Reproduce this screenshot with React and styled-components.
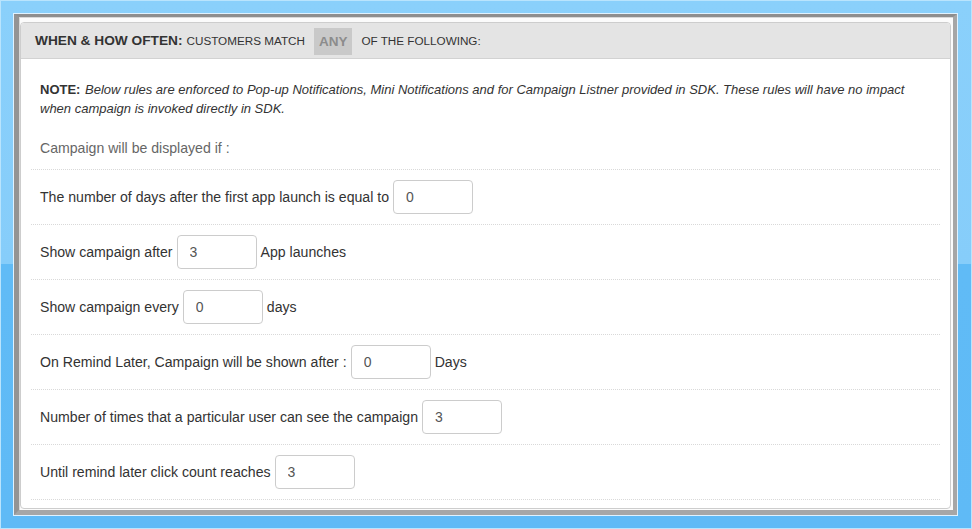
import React from "react";
import styled, { createGlobalStyle } from "styled-components";

const Global = createGlobalStyle`
  html, body { margin: 0; padding: 0; }
  body { font-family: "Liberation Sans", Arial, sans-serif; }
  * { box-sizing: border-box; }
`;

const Page = styled.div`
  width: 972px;
  height: 529px;
  padding: 12px 13px 12px 12px;
  background: linear-gradient(#8ad0fb 0%, #86cdfa 50%, #60bbf6 50%, #5fbaf6 100%);
  border: 1px solid #b9e4fd;
`;

const Window = styled.div`
  height: 100%;
  border: 1px solid #dff2ff;
`;

const Frame = styled.div`
  height: 100%;
  border-style: solid;
  border-width: 3px 4px 5px 5px;
  border-color: #8e8e8e #a6a6a6 #a6a6a6 #949494;
  background: #fbfbfb;
  padding: 5px 2px 1px 1px;
  box-shadow: inset 1px 1px 0 #d8d8d8;
`;

const Panel = styled.div`
  height: 100%;
  background: #fff;
  border: 1px solid #cdcdcd;
  border-radius: 4px;
  display: flex;
  flex-direction: column;
  overflow: hidden;
`;

const Header = styled.div`
  height: 36px;
  flex: none;
  background: #e4e4e4;
  border-bottom: 1px solid #d2d2d2;
  display: flex;
  align-items: center;
  padding: 0 14px;
  color: #333;
  font-size: 11.7px;
  text-transform: uppercase;
`;

const Title = styled.span`
  font-weight: bold;
  font-size: 13.7px;
  margin-right: 4px;
`;

const Badge = styled.span`
  background: #c9c9c9;
  color: #8c8c8c;
  font-weight: bold;
  font-size: 13.5px;
  height: 27px;
  margin-top: 2px;
  display: inline-flex;
  align-items: center;
  padding: 0 5px;
  margin-left: 9px;
  margin-right: 9px;
`;

const Body = styled.div`
  padding: 21px 10px 7px;
  display: flex;
  flex-direction: column;
`;

const Note = styled.p`
  margin: 0 0 20px;
  padding: 0 9px;
  font-size: 13px;
  line-height: 19px;
  font-style: italic;
  color: #333;
  b { font-style: normal; margin-right: 1px; }
`;

const Label = styled.div`
  padding: 0 9px;
  font-size: 14.1px;
  line-height: 20px;
  color: #666;
  margin-bottom: 11px;
`;

const Row = styled.div`
  display: flex;
  align-items: center;
  gap: 4px;
  padding: 10px 9px;
  border-top: 1px dotted #d9d9d9;
  font-size: 14.12px;
  color: #333;
  &:last-child { border-bottom: 1px dotted #d9d9d9; }
`;

const Input = styled.input`
  width: 80px;
  height: 34px;
  border: 1px solid #cccccc;
  border-radius: 4px;
  padding: 0 12px;
  font-family: "Liberation Sans", Arial, sans-serif;
  font-size: 14px;
  color: #555;
  background: #fff;
  outline: none;
`;

const rules = [
  ["The number of days after the first app launch is equal to", "0", ""],
  ["Show campaign after", "3", "App launches"],
  ["Show campaign every", "0", "days"],
  ["On Remind Later, Campaign will be shown after :", "0", "Days"],
  ["Number of times that a particular user can see the campaign", "3", ""],
  ["Until remind later click count reaches", "3", ""],
];

export default function App() {
  return (
    <>
      <Global />
      <Page>
        <Window>
          <Frame>
            <Panel>
              <Header>
                <Title>When &amp; How Often:</Title>
                Customers Match
                <Badge>ANY</Badge>
                of the following:
              </Header>
              <Body>
                <Note>
                  <b>NOTE:</b> Below rules are enforced to Pop-up Notifications, Mini Notifications and for Campaign Listner provided in SDK. These rules will have no impact when campaign is invoked directly in SDK.
                </Note>
                <Label>Campaign will be displayed if :</Label>
                <div>
                  {rules.map(([before, val, after], i) => (
                    <Row key={i}>
                      <span>{before}</span>
                      <Input defaultValue={val} />
                      {after && <span>{after}</span>}
                    </Row>
                  ))}
                </div>
              </Body>
            </Panel>
          </Frame>
        </Window>
      </Page>
    </>
  );
}
